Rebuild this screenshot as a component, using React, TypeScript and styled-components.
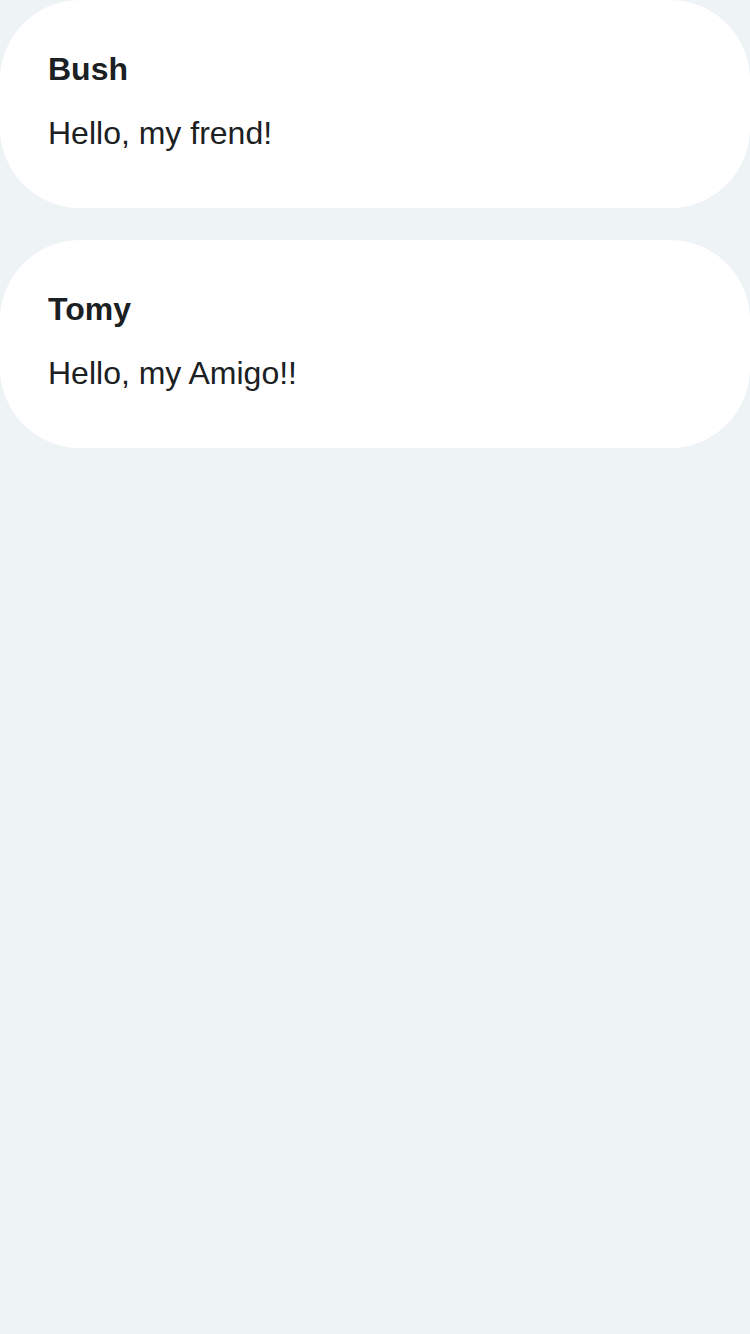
import React from "react";
import styled, { createGlobalStyle } from "styled-components";

const Global = createGlobalStyle`
  html, body {
    margin: 0;
    padding: 0;
    background: #eef3f6;
  }
  body {
    font-family: "Liberation Sans", Arial, sans-serif;
    color: #1b2023;
  }
`;

const List = styled.div`
  display: flex;
  flex-direction: column;
  gap: 32px;
  min-height: 1334px;
  background: #eef3f6;
`;

const Card = styled.div`
  background: #ffffff;
  border-radius: 80px;
  padding: 45px 48px 51px;
  display: flex;
  flex-direction: column;
  gap: 16px;
`;

const Name = styled.div`
  font-size: 32px;
  font-weight: 700;
  line-height: 48px;
`;

const Message = styled.div`
  font-size: 32px;
  line-height: 48px;
`;

const messages = [
  { name: "Bush", text: "Hello, my frend!" },
  { name: "Tomy", text: "Hello, my Amigo!!" },
];

export default function App() {
  return (
    <>
      <Global />
      <List>
        {messages.map((m) => (
          <Card key={m.name}>
            <Name>{m.name}</Name>
            <Message>{m.text}</Message>
          </Card>
        ))}
      </List>
    </>
  );
}
